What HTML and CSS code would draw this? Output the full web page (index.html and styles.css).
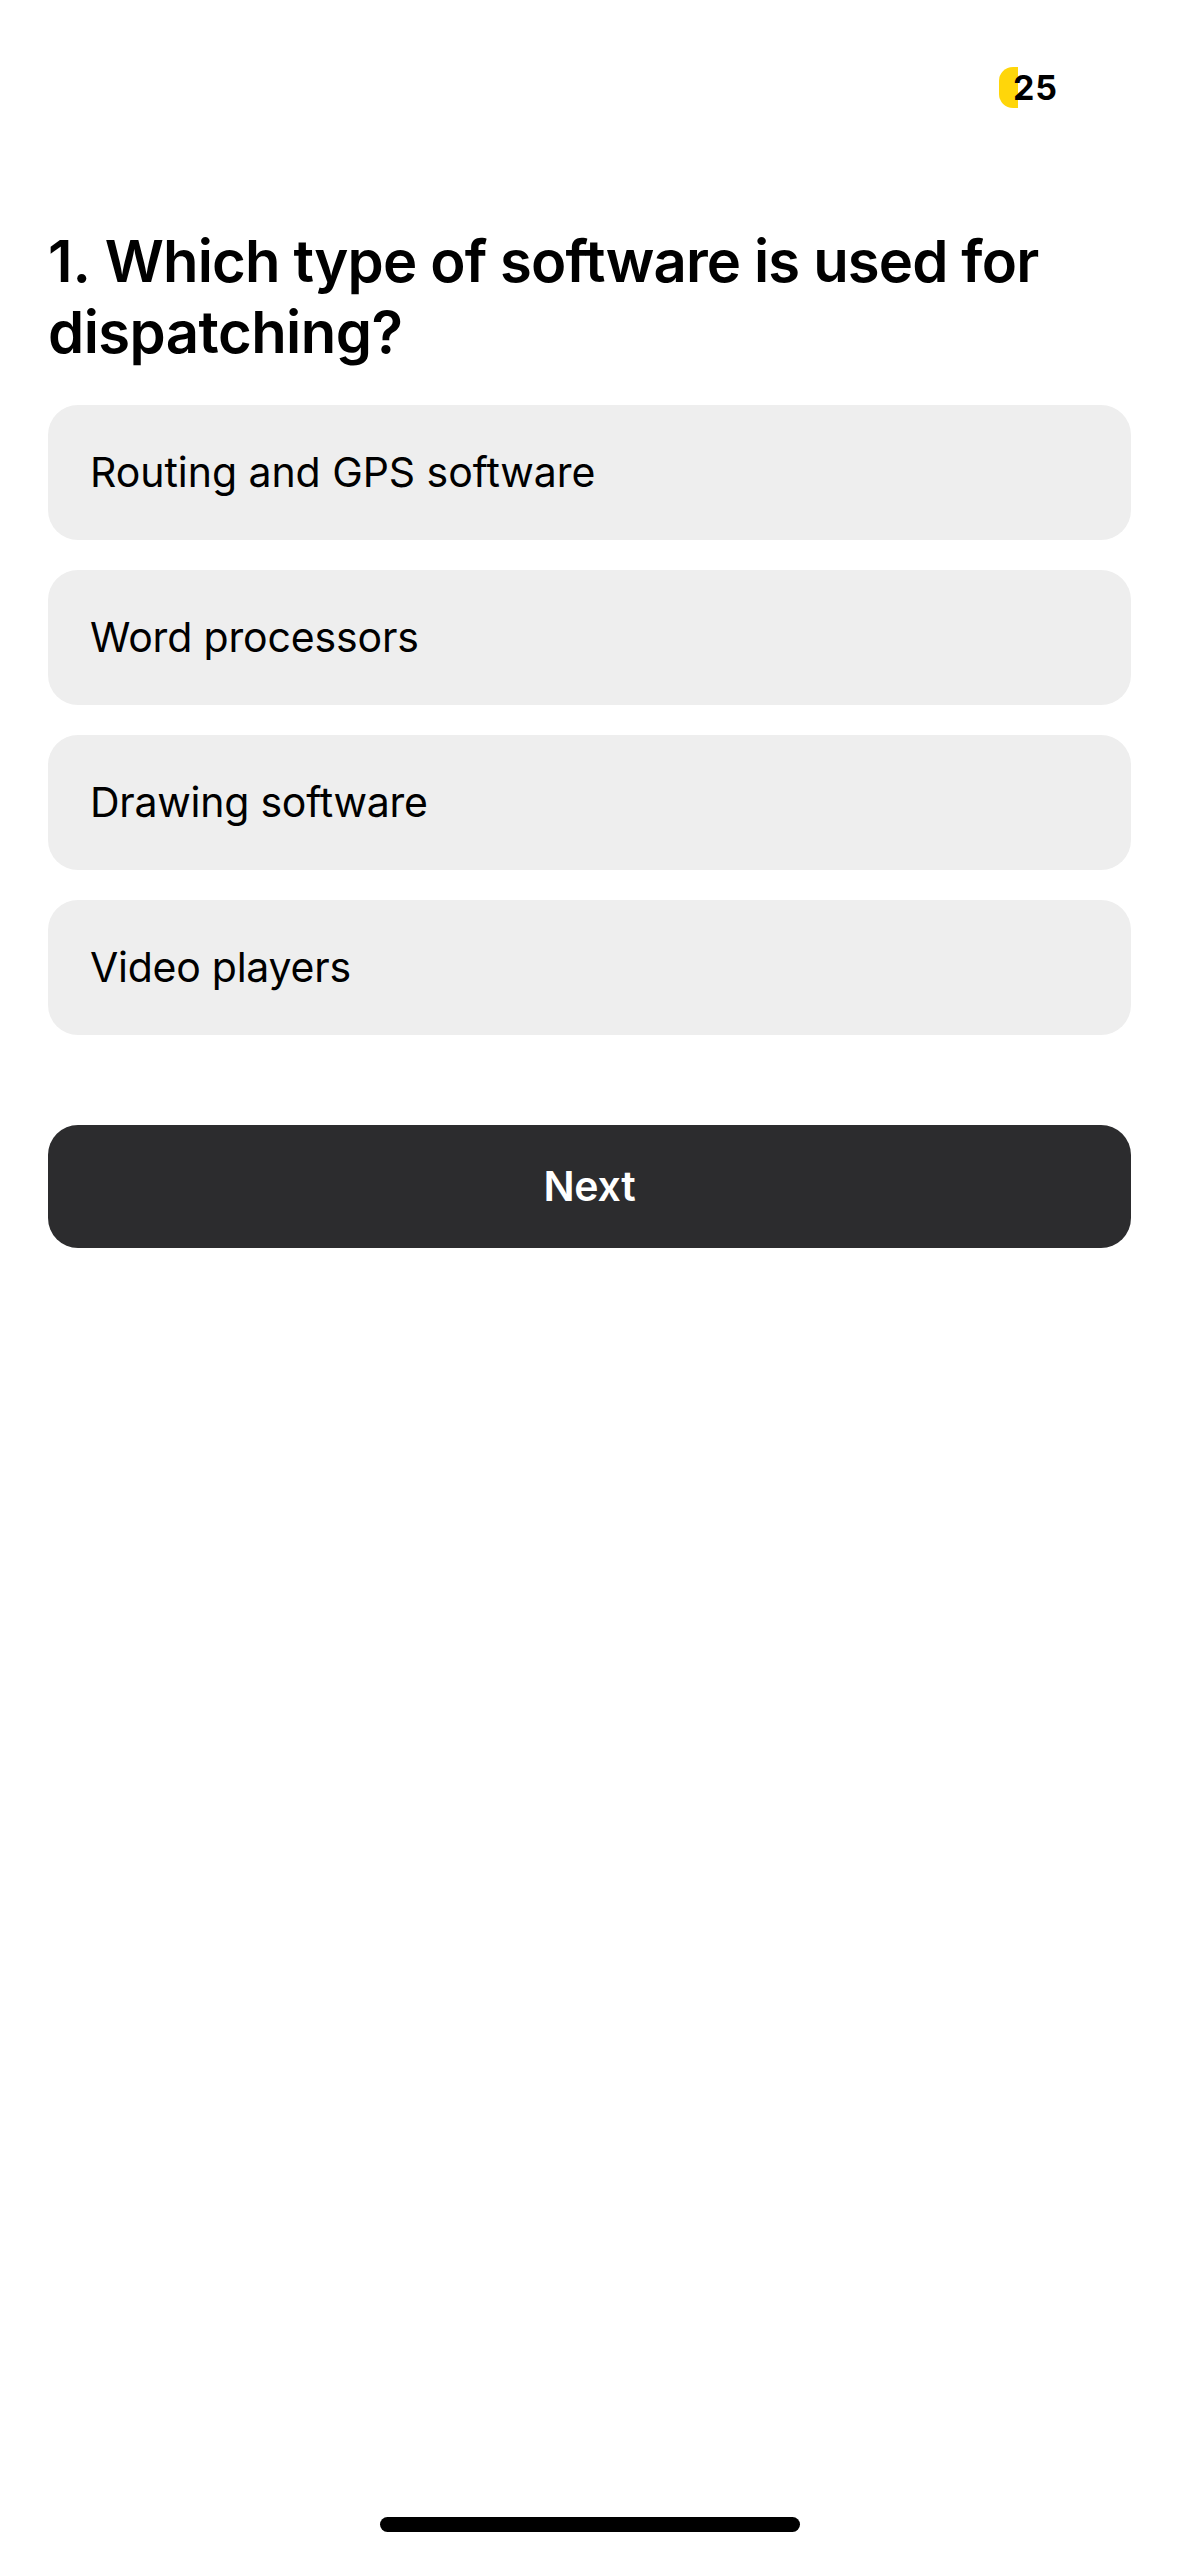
FILE: index.html
```html
<!DOCTYPE html>
<html lang="en">
<head>
<meta charset="utf-8">
<title>Quiz</title>
<link rel="stylesheet" href="styles.css">
</head>
<body>
<div class="screen">
  <header class="status-bar">
    <div class="battery"><span class="battery-level">25</span></div>
  </header>
  <main class="quiz">
    <h1 class="question"><span class="line line-first"><span class="number">1.</span> Which type of software is used for</span> <span class="line line-second">dispatching?</span></h1>
    <div class="options">
      <button class="option"><span class="label label-routing">Routing and GPS software</span></button>
      <button class="option"><span class="label label-word">Word processors</span></button>
      <button class="option"><span class="label">Drawing software</span></button>
      <button class="option"><span class="label">Video players</span></button>
    </div>
    <button class="next"><span class="next-label">Next</span></button>
  </main>
  <div class="home-indicator"></div>
</div>
</body>
</html>
```
FILE: styles.css
```css
* { box-sizing: border-box; }
body { margin: 0; background: #fff; color: #000; font-family: Inter, sans-serif; font-feature-settings: "calt" 0, "liga" 0; }
button { font: inherit; font-feature-settings: inherit; color: inherit; border: 0; margin: 0; }
.screen { width: 1179px; height: 2556px; display: flex; flex-direction: column; }
.status-bar { height: 177px; padding: 67px 104px 0 0; display: flex; justify-content: flex-end; }
.battery { width: 76px; height: 41px; border-radius: 14px; background: linear-gradient(to right, #ffd60a 19px, #fff 19px); display: flex; align-items: center; padding-left: 14px; }
.battery-level { font-size: 34px; font-weight: 700; line-height: 41px; letter-spacing: 0.8px; }
.quiz { flex: 1; padding: 49px 48px 0; }
.question { margin: 0; font-size: 58px; font-weight: 600; line-height: 71px; }
.line { display: block; white-space: nowrap; }
.line-first { letter-spacing: -0.85px; }
.line-second { letter-spacing: -0.55px; }
.number { letter-spacing: 0; }
.options { margin-top: 37px; display: flex; flex-direction: column; gap: 30px; }
.option { height: 135px; padding: 0 42px 1px; border-radius: 30px; background: #eee; display: flex; align-items: center; font-size: 41px; text-align: left; }
.label { letter-spacing: -0.25px; }
.label-routing { letter-spacing: -0.05px; }
.label-word { letter-spacing: -0.15px; }
.next { width: 100%; height: 123px; padding: 0 0 1px; margin-top: 90px; border-radius: 30px; background: #2c2c2e; color: #fff; font-size: 41px; font-weight: 600; letter-spacing: -0.2px; }
.home-indicator { width: 420px; height: 15px; margin: 0 auto 24px; border-radius: 8px; background: #000; }
```
